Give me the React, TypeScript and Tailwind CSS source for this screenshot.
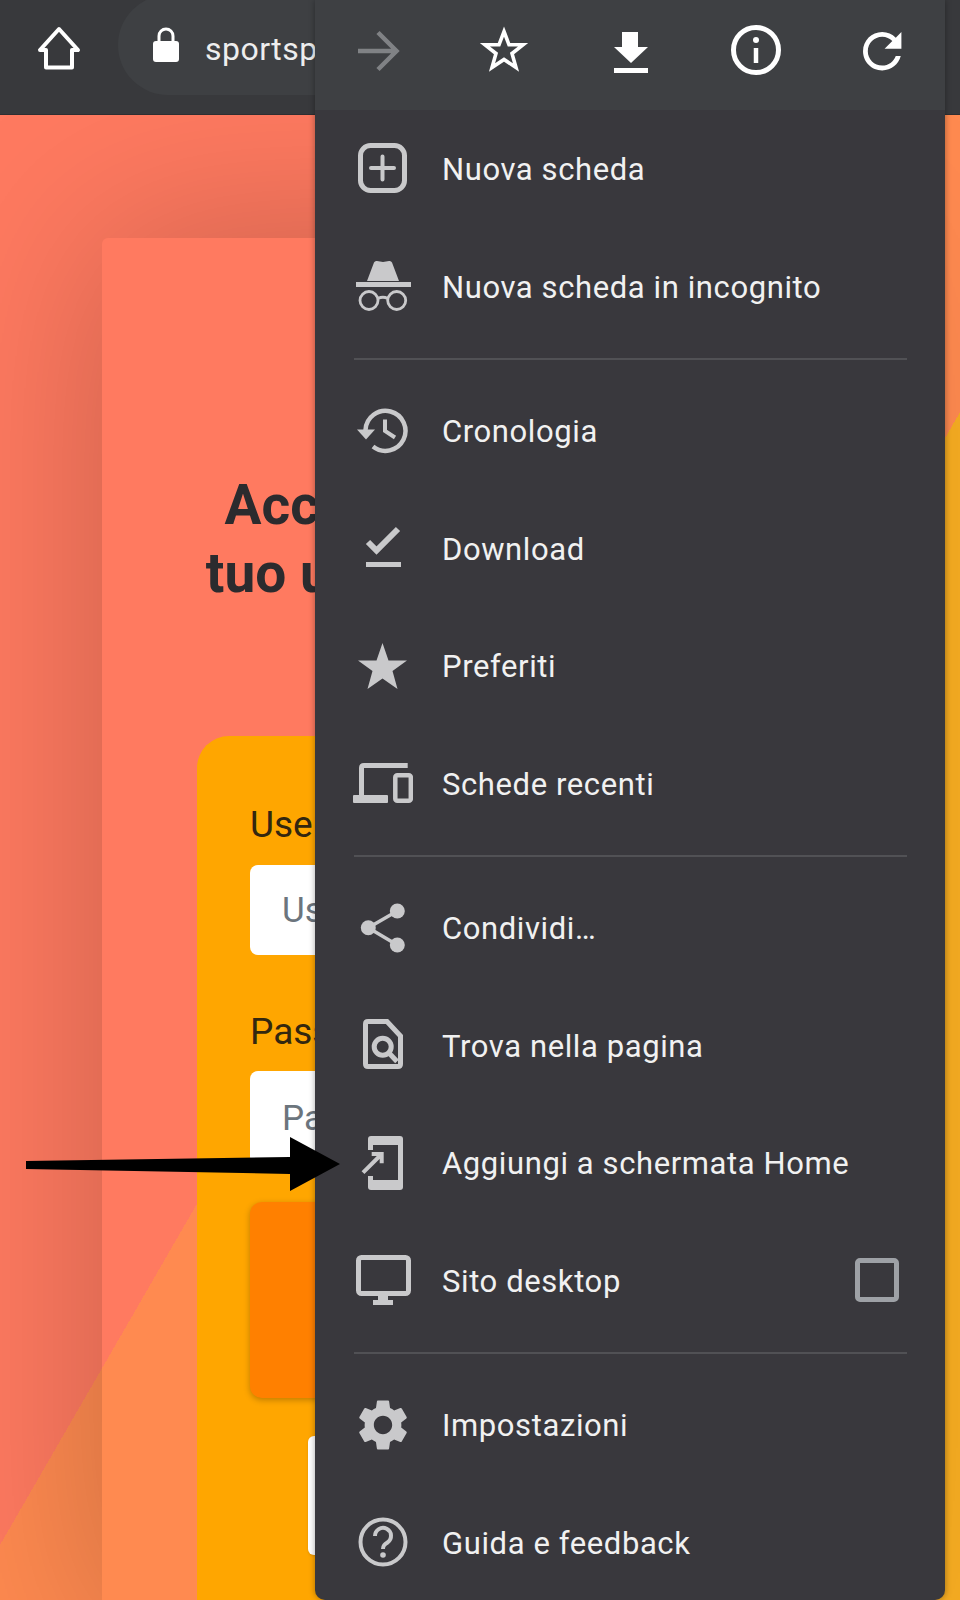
import React from "react";

const Box: React.FC<{ children: React.ReactNode; stroke?: string }> = ({ children, stroke = "#c9c9cb" }) => (
    <svg width="60" height="60" viewBox="0 0 60 60" fill="none" stroke={stroke} className="shrink-0">
        {children}
    </svg>
);

const NewTabIcon = () => (
    <Box>
        <rect x="7.5" y="6.5" width="44" height="45" rx="10" strokeWidth="5" />
        <path d="M18 29h23M29.5 17.5v23" strokeWidth="4" strokeLinecap="round" />
    </Box>
);

const IncognitoIcon = () => (
    <Box>
        <path d="M14 25L21 6.5Q22 4.5 24 5L30 6L36 5Q38 4.5 39 6.5L46 25Z" fill="#c9c9cb" stroke="none" />
        <rect x="3" y="26" width="55" height="5" fill="#c9c9cb" stroke="none" />
        <circle cx="16" cy="44.5" r="9" strokeWidth="2.8" />
        <circle cx="43.7" cy="44.5" r="9" strokeWidth="2.8" />
        <path d="M25 42.5Q30 40 34.7 42.5" strokeWidth="2.8" />
    </Box>
);

const HistoryIcon = () => (
    <Box>
        <path d="M12.5 29A20 20 0 1 1 20 45.5" strokeWidth="4.5" />
        <path d="M4 28.5H22L13 38.5Z" fill="#c9c9cb" stroke="none" />
        <path d="M32 18.5V30L42 36.5" strokeWidth="4" />
    </Box>
);

const DownloadsIcon = () => (
    <Box>
        <path d="M15 24L23.5 32.5L45 11" strokeWidth="6" />
        <rect x="13" y="44" width="35" height="5" fill="#c9c9cb" stroke="none" />
    </Box>
);

const StarIcon = () => (
    <Box>
        <polygon
            points="29.5,7 35.5,24.5 54,24.5 39.5,35 44.5,53 29.5,42.5 14.5,53 19.5,35 5,24.5 23.5,24.5"
            fill="#c9c9cb"
            stroke="none"
        />
    </Box>
);

const DevicesIcon = () => (
    <Box>
        <path d="M54.7 12.5H11Q8.5 12.5 8.5 15V43" strokeWidth="5" />
        <rect x="0" y="42" width="35" height="8" rx="1" fill="#c9c9cb" stroke="none" />
        <rect x="42.3" y="22.3" width="15.5" height="25.5" rx="2" strokeWidth="4.5" />
    </Box>
);

const ShareIcon = () => (
    <Box>
        <path d="M44.3 13L15.3 29.7L44.3 47" strokeWidth="3.5" />
        <circle cx="44.3" cy="13" r="7.5" fill="#c9c9cb" stroke="none" />
        <circle cx="15.3" cy="29.7" r="7.5" fill="#c9c9cb" stroke="none" />
        <circle cx="44.3" cy="47" r="7.5" fill="#c9c9cb" stroke="none" />
    </Box>
);

const FindIcon = () => (
    <Box>
        <path d="M15 6.5H34L47.5 21V49Q47.5 51.5 45 51.5H15Q12.5 51.5 12.5 49V9Q12.5 6.5 15 6.5Z" strokeWidth="5" />
        <circle cx="29.7" cy="31.7" r="8.5" strokeWidth="5" />
        <path d="M36 38L44 46.5" strokeWidth="5" />
    </Box>
);

const AddHomeIcon = () => (
    <Box>
        <rect x="15" y="3" width="35" height="9" rx="3" fill="#c9c9cb" stroke="none" />
        <rect x="15" y="47" width="35" height="10" rx="3" fill="#c9c9cb" stroke="none" />
        <rect x="45" y="6" width="5" height="48" fill="#c9c9cb" stroke="none" />
        <rect x="15" y="8" width="5" height="9" fill="#c9c9cb" stroke="none" />
        <rect x="15" y="43" width="5" height="8" fill="#c9c9cb" stroke="none" />
        <path d="M10 39.7L28.7 21M18.7 21H28.7V30.3" strokeWidth="4" />
    </Box>
);

const DesktopIcon = () => (
    <Box>
        <rect x="5.5" y="7.5" width="50" height="36" rx="3" strokeWidth="5" />
        <rect x="25" y="45" width="10" height="6" fill="#c9c9cb" stroke="none" />
        <rect x="20" y="50" width="20" height="5" fill="#c9c9cb" stroke="none" />
    </Box>
);

const SettingsIcon = () => (
    <Box>
        <path
            transform="translate(-0.6 -0.6) scale(2.55)"
            fill="#c9c9cb"
            stroke="none"
            d="M19.14 12.94c.04-.3.06-.61.06-.94 0-.32-.02-.64-.07-.94l2.03-1.58c.18-.14.23-.41.12-.61l-1.92-3.32c-.12-.22-.37-.29-.59-.22l-2.39.96c-.5-.38-1.03-.7-1.62-.94l-.36-2.54c-.04-.24-.24-.41-.48-.41h-3.84c-.24 0-.43.17-.47.41l-.36 2.54c-.59.24-1.13.57-1.62.94l-2.39-.96c-.22-.08-.47 0-.59.22L2.74 8.87c-.12.21-.08.47.12.61l2.03 1.58c-.05.3-.09.63-.09.94s.02.64.07.94l-2.03 1.58c-.18.14-.23.41-.12.61l1.92 3.32c.12.22.37.29.59.22l2.39-.96c.5.38 1.03.7 1.62.94l.36 2.54c.05.24.24.41.48.41h3.84c.24 0 .44-.17.47-.41l.36-2.54c.59-.24 1.13-.56 1.62-.94l2.39.96c.22.08.47 0 .59-.22l1.92-3.32c.12-.22.07-.47-.12-.61l-2.01-1.58zM12 15.6c-1.98 0-3.6-1.62-3.6-3.6s1.62-3.6 3.6-3.6 3.6 1.62 3.6 3.6-1.62 3.6-3.6 3.6z"
        />
    </Box>
);

const HelpIcon = () => (
    <Box>
        <circle cx="30" cy="30" r="22.5" strokeWidth="4" />
        <path d="M22 24A8 8 0 1 1 34.5 30.5C31.5 32.5 30 33.5 30 37" strokeWidth="4" />
        <circle cx="30" cy="43" r="2.8" fill="#c9c9cb" stroke="none" />
    </Box>
);

const menuGroups: { label: string; icon: React.ReactNode; checkbox?: boolean }[][] = [
    [
        {label: "Nuova scheda", icon: <NewTabIcon />},
        {label: "Nuova scheda in incognito", icon: <IncognitoIcon />},
    ],
    [
        {label: "Cronologia", icon: <HistoryIcon />},
        {label: "Download", icon: <DownloadsIcon />},
        {label: "Preferiti", icon: <StarIcon />},
        {label: "Schede recenti", icon: <DevicesIcon />},
    ],
    [
        {label: "Condividi…", icon: <ShareIcon />},
        {label: "Trova nella pagina", icon: <FindIcon />},
        {label: "Aggiungi a schermata Home", icon: <AddHomeIcon />},
        {label: "Sito desktop", icon: <DesktopIcon />, checkbox: true},
    ],
    [
        {label: "Impostazioni", icon: <SettingsIcon />},
        {label: "Guida e feedback", icon: <HelpIcon />},
    ],
];

const MenuToolbar = () => (
    <div className="grid h-[110px] grid-cols-5 items-center bg-[#3e4043] pb-[10px]">
        <div className="flex justify-center">
            <Box stroke="#808285">
                <path d="M10 31H48M30 12.5L48.5 31L30 49.5" strokeWidth="4.5" />
            </Box>
        </div>
        <div className="flex justify-center">
            <Box stroke="#ffffff">
                <polygon
                    points="30,11.5 35,24.8 49,24.8 38,33.5 42,47.5 30,39.5 18,47.5 22,33.5 11,24.8 25,24.8"
                    strokeWidth="3.6"
                />
            </Box>
        </div>
        <div className="flex justify-center">
            <Box stroke="#ffffff">
                <polygon points="22,12 38,12 38,27 48,27 31,43 14,27 22,27" fill="#ffffff" stroke="none" />
                <rect x="14" y="48" width="34" height="5" fill="#ffffff" stroke="none" />
            </Box>
        </div>
        <div className="flex justify-center">
            <Box stroke="#ffffff">
                <circle cx="30" cy="30" r="22.5" strokeWidth="5" />
                <path d="M30 28V43" strokeWidth="4.5" />
                <circle cx="30" cy="20" r="3" fill="#ffffff" stroke="none" />
            </Box>
        </div>
        <div className="flex justify-center">
            <Box stroke="#ffffff">
                <path
                    transform="translate(1.4 2.4) scale(2.4)"
                    fill="#ffffff"
                    stroke="none"
                    d="M17.65 6.35C16.2 4.9 14.21 4 12 4c-4.42 0-7.99 3.58-7.99 8s3.57 8 7.99 8c3.73 0 6.84-2.55 7.73-6h-2.08c-.82 2.33-3.04 4-5.65 4-3.31 0-6-2.69-6-6s2.69-6 6-6c1.66 0 3.14.69 4.22 1.78L13 11h7V4l-2.35 2.35z"
                />
            </Box>
        </div>
    </div>
);

const Menu = () => (
    <div className="absolute left-[315px] top-0 h-[1600px] w-[630px] overflow-hidden rounded-b-[10px] bg-[#39383d] shadow-[0_0_6px_rgba(0,0,0,0.35)]">
        <MenuToolbar />
        {menuGroups.map((group, groupIdx) => (
            <div key={groupIdx}>
                {groupIdx > 0 && (
                    <div className="py-[12.5px] pl-[39px] pr-[38px]">
                        <div className="h-[2px] bg-[#515155]" />
                    </div>
                )}
                {group.map((item) => (
                    <div key={item.label} className="flex h-[117.5px] items-center gap-[29px] pl-[38px]">
                        {item.icon}
                        <span className="pt-[2px] text-[31px] leading-none tracking-[0.6px] text-[#f1f1f1]">
                            {item.label}
                        </span>
                        {item.checkbox && (
                            <div className="ml-auto mr-[46px] h-[44px] w-[44px] rounded-[5px] border-[5px] border-[#9ea1a6]" />
                        )}
                    </div>
                ))}
            </div>
        ))}
    </div>
);

const BrowserBar = () => (
    <div className="flex h-[115px] items-start overflow-hidden border-b border-[#2f2e31] bg-[#38393c]">
        <div className="ml-[35px] mt-[23px]">
            <svg width="48" height="48" viewBox="0 0 48 48" fill="none" stroke="#ffffff" strokeWidth="4">
                <path d="M5 27L24 6L43 27H37V44.5H11V27Z" strokeLinejoin="round" />
            </svg>
        </div>
        <div className="ml-[35px] -mt-[5px] flex h-[100px] w-[500px] shrink-0 items-center rounded-full bg-[#3e4043] pl-[34px]">
            <svg width="28" height="36" viewBox="0 0 28 36" fill="#ffffff">
                <rect x="1" y="14" width="26" height="21" rx="3" />
                <path d="M7 15V9a7 7 0 0 1 14 0v6" fill="none" stroke="#ffffff" strokeWidth="3" />
            </svg>
            <span className="ml-[25px] pt-[8px] text-[32px] tracking-[0.5px] text-[#eeeeee]">sportsport.it</span>
        </div>
    </div>
);

const LoginPage = () => (
    <div className="h-[1485px] overflow-hidden bg-[linear-gradient(120deg,#ff7a60_715px,#ff8a50_715px,#ff8a50_980px,#f7ad22_980px)] pt-[123px]">
        <div className="mx-[102px] h-[1400px] rounded-t-md pt-[233px] shadow-[0_0_190px_rgba(0,0,0,0.22)]">
            <h1 className="whitespace-nowrap text-center text-[55px] font-bold leading-[68px] text-[#2b2b2e]">
                Accedi, utilizzando il
                <br />
                tuo utente e password
            </h1>
            <div className="mx-[95px] mt-[129px] h-[900px] rounded-tl-[32px] rounded-tr-[32px] bg-[#ffa600] px-[53px] pt-[67px]">
                <label className="mb-[18px] block text-[37px] leading-[44px] text-[#33270f]">Username</label>
                <input
                    placeholder="Username"
                    className="block h-[90px] w-full rounded-lg bg-white px-[32px] text-[35px] placeholder:text-[#6c757d]"
                />
                <label className="mb-[17px] mt-[55px] block text-[37px] leading-[44px] text-[#33270f]">Password</label>
                <input
                    placeholder="Password"
                    className="block h-[94px] w-full rounded-lg bg-white px-[32px] text-[35px] placeholder:text-[#6c757d]"
                />
                <button className="mt-[37px] block h-[196px] w-full rounded-xl bg-[#ff8000] shadow-[0_2px_6px_rgba(0,0,0,0.25)]" />
                <button className="ml-[58px] mt-[38px] block h-[119px] w-[344px] rounded-md bg-white shadow-sm" />
            </div>
        </div>
    </div>
);

export default function App() {
    return (
        <div className="relative h-[1600px] w-[960px] overflow-hidden font-[Roboto,sans-serif]">
            <BrowserBar />
            <LoginPage />
            <Menu />
            <svg className="absolute left-0 top-0" width="360" height="1600" viewBox="0 0 360 1600">
                <polygon points="26,1161 290,1157 290,1137 340,1164 290,1191 290,1174 26,1169" fill="#000000" />
            </svg>
        </div>
    );
}
